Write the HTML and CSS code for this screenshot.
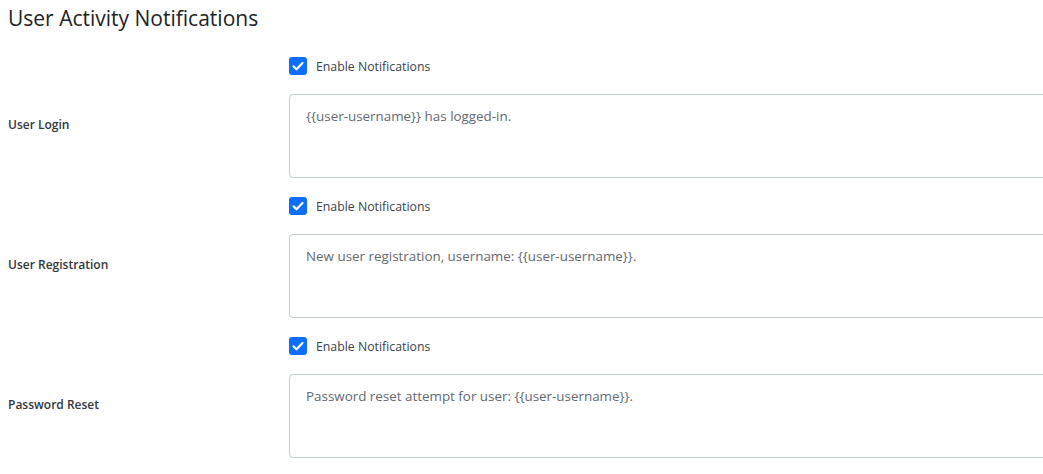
FILE: index.html
```html
<!DOCTYPE html>
<html lang="en">
<head>
<meta charset="utf-8">
<title>User Activity Notifications</title>
<link rel="stylesheet" href="styles.css">
</head>
<body>
<h2 class="title">User Activity Notifications</h2>
<div class="form">
  <div class="row">
    <div class="label">User Login</div>
    <div class="field">
      <label class="check"><span class="box"><svg viewBox="0 0 18 18" width="18" height="18"><path d="M4.5 9.3l3 3 6-6.3" fill="none" stroke="#fff" stroke-width="2.2" stroke-linecap="round" stroke-linejoin="round"/></svg></span>Enable Notifications</label>
      <textarea class="msg">{{user-username}} has logged-in.</textarea>
    </div>
  </div>
  <div class="row">
    <div class="label">User Registration</div>
    <div class="field">
      <label class="check"><span class="box"><svg viewBox="0 0 18 18" width="18" height="18"><path d="M4.5 9.3l3 3 6-6.3" fill="none" stroke="#fff" stroke-width="2.2" stroke-linecap="round" stroke-linejoin="round"/></svg></span>Enable Notifications</label>
      <textarea class="msg">New user registration, username: {{user-username}}.</textarea>
    </div>
  </div>
  <div class="row">
    <div class="label">Password Reset</div>
    <div class="field">
      <label class="check"><span class="box"><svg viewBox="0 0 18 18" width="18" height="18"><path d="M4.5 9.3l3 3 6-6.3" fill="none" stroke="#fff" stroke-width="2.2" stroke-linecap="round" stroke-linejoin="round"/></svg></span>Enable Notifications</label>
      <textarea class="msg">Password reset attempt for user: {{user-username}}.</textarea>
    </div>
  </div>
</div>
</body>
</html>
```
FILE: styles.css
```css
html, body {
  margin: 0;
  padding: 0;
  background: #fff;
  overflow: hidden;
}
body {
  padding: 0 8px;
  font-family: "Open Sans", "Noto Sans", sans-serif;
  font-size: 13px;
  color: #333;
}
.title {
  font-family: "Open Sans", sans-serif;
  font-weight: 400;
  font-size: 21px;
  line-height: 28px;
  margin: 4px 0 0;
  color: #1d2327;
  letter-spacing: 0;
}
.form {
  margin-top: 25px;
}
.row {
  display: flex;
  height: 140px;
}
.label {
  width: 281px;
  flex: none;
  padding-top: 59px;
  line-height: 18px;
  font-weight: 600;
  font-size: 12px;
  color: #32373c;
}
.field {
  flex: none;
  width: 900px;
}
.check {
  display: flex;
  align-items: center;
  height: 18px;
  font-size: 12.3px;
  color: #3c434a;
  margin-bottom: 19px;
}
.box {
  width: 18px;
  height: 18px;
  border-radius: 3px;
  background: #0d6efd;
  margin-right: 9px;
  display: block;
}
.box svg {
  display: block;
}
.msg {
  display: block;
  box-sizing: border-box;
  width: 900px;
  height: 84px;
  border: 1px solid #c3ccd5;
  border-radius: 4px;
  padding: 11px 16px;
  font-family: "Open Sans", "Noto Sans", sans-serif;
  font-size: 13.4px;
  line-height: 20px;
  color: #646970;
  resize: none;
  outline: none;
}
```
